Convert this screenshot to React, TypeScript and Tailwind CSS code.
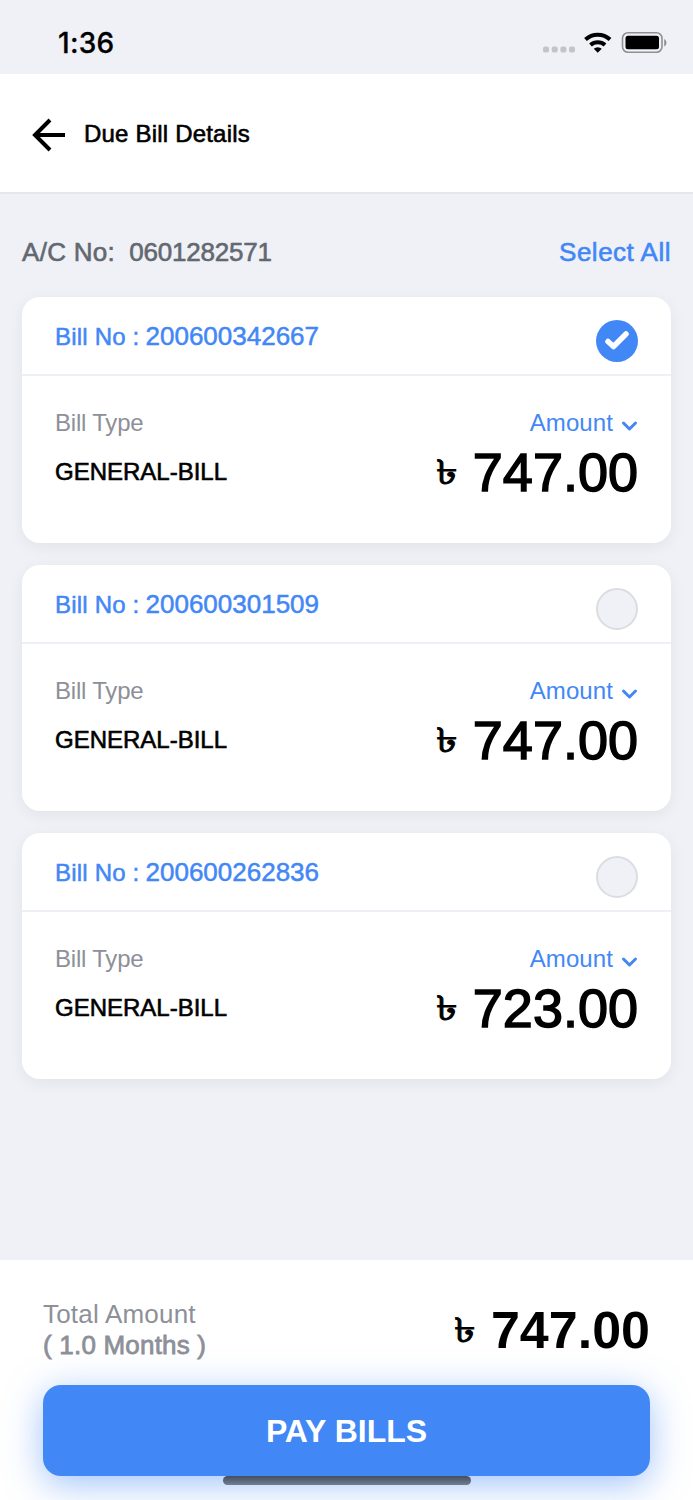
import { useState } from 'react';

type Bill = { billNo: string; type: string; amount: string };

const bills: Bill[] = [
  { billNo: '200600342667', type: 'GENERAL-BILL', amount: '747.00' },
  { billNo: '200600301509', type: 'GENERAL-BILL', amount: '747.00' },
  { billNo: '200600262836', type: 'GENERAL-BILL', amount: '723.00' },
];

function StatusBar() {
  return (
    <div className="h-[74px] flex items-center justify-between pl-[58px] pr-[26px] pt-3">
      <span className="font-['Inter'] font-medium text-[28px] leading-8 tracking-[0.3px] -mt-px [-webkit-text-stroke:0.3px_black]">1:36</span>
      <svg width="124" height="24" viewBox="0 0 124 24" fill="none">
        <g fill="#c3c4c8">
          <rect x="0" y="15.500" width="6" height="6" rx="2" />
          <rect x="8.700" y="15.500" width="6" height="6" rx="2" />
          <rect x="17.400" y="15.500" width="6" height="6" rx="2" />
          <rect x="26" y="15.500" width="6" height="6" rx="2" />
        </g>
        <g stroke="#000" strokeWidth="4">
          <path d="M42.500 8.500a18 18 0 0 1 24.500 0" />
          <path d="M47.500 14a10.800 10.800 0 0 1 14.500 0" />
        </g>
        <path d="M54.750 21.800l-4-4a6 6 0 0 1 8 0z" fill="#000" />
        <rect x="79.500" y="1.800" width="39.500" height="19.500" rx="5.500" stroke="#8f9094" strokeWidth="1.600" />
        <rect x="82.500" y="4.800" width="33.500" height="13.500" rx="2.500" fill="#000" />
        <path d="M121.200 8v7.500c3-1.500 3-6 0-7.500z" fill="#8f9094" />
      </svg>
    </div>
  );
}

function Amount({ value, bold = false }: { value: string; bold?: boolean }) {
  return (
    <div className="flex items-center gap-[15px]">
      <span className="inline-block origin-right scale-x-[1.28] text-[34px] leading-none mb-px [-webkit-text-stroke:0.9px_black]">৳</span>
      <span
        className={
          bold
            ? 'font-bold text-[52px] leading-[56px]'
            : 'text-[54px] leading-[56px] [-webkit-text-stroke:1.5px_black]'
        }
      >
        {value}
      </span>
    </div>
  );
}

function Check({ checked, onClick }: { checked: boolean; onClick: () => void }) {
  return (
    <button
      type="button"
      onClick={onClick}
      className={
        checked
          ? 'size-[42px] mt-[11px] rounded-full bg-[#4287f6] flex items-center justify-center'
          : 'size-[42px] mt-[11px] rounded-full bg-[#f0f1f6] border-2 border-[#dcdde2]'
      }
    >
      {checked && (
        <svg width="26" height="22" viewBox="0 0 26 22" fill="none" stroke="#fff" strokeWidth="5.500" strokeLinecap="round" strokeLinejoin="round">
          <path d="M4 11.500l5.500 5L22 4" />
        </svg>
      )}
    </button>
  );
}

function BillCard({ bill, checked, onToggle }: { bill: Bill; checked: boolean; onToggle: () => void }) {
  return (
    <div className="h-[246px] bg-white rounded-[18px] shadow-[0_4px_16px_rgba(0,0,0,0.06)]">
      <div className="h-[79px] px-[33px] flex items-center justify-between border-b-2 border-[#eff0f5]">
        <div className="flex items-baseline gap-[6px] text-[#4287f6] [-webkit-text-stroke:0.5px_#4287f6] pt-[2px]">
          <span className="text-[24px] leading-8 tracking-[0.2px]">Bill No :</span>
          <span className="text-[26px] leading-8">{bill.billNo}</span>
        </div>
        <Check checked={checked} onClick={onToggle} />
      </div>
      <div className="px-[33px] pt-[31px] flex justify-between">
        <div>
          <p className="text-[24px] leading-8 tracking-[-0.2px] text-[#8d9098]">Bill Type</p>
          <p className="mt-[17px] text-[24px] leading-8 [-webkit-text-stroke:0.6px_black]">{bill.type}</p>
        </div>
        <div className="flex flex-col items-end">
          <div className="flex items-center gap-[8px] text-[#4287f6]">
            <span className="text-[24px] leading-8 tracking-[0.1px]">Amount</span>
            <svg width="17" height="12" viewBox="0 0 17 12" fill="none" stroke="currentColor" strokeWidth="3" strokeLinecap="round" strokeLinejoin="round" className="mt-[5px]">
              <path d="M2.500 3l6 6 6-6" />
            </svg>
          </div>
          <div className="mt-[5px]">
            <Amount value={bill.amount} />
          </div>
        </div>
      </div>
    </div>
  );
}

export default function App() {
  const [selected, setSelected] = useState<string[]>([bills[0].billNo]);

  function toggle(billNo: string) {
    setSelected(prev => (prev.includes(billNo) ? prev.filter(b => b !== billNo) : [...prev, billNo]));
  }

  const total = bills
    .filter(b => selected.includes(b.billNo))
    .reduce((sum, b) => sum + parseFloat(b.amount), 0);

  return (
    <div className="w-[693px] h-[1500px] flex flex-col overflow-hidden bg-[#f0f1f6] font-['Liberation_Sans',sans-serif] text-black">
      <StatusBar />
      <header className="h-[120px] bg-white border-b-2 border-[#e5e6eb] flex items-center gap-[18px] pl-[32px] pt-[3px]">
        <svg width="34" height="34" viewBox="0 0 34 34" fill="none" stroke="#000" strokeWidth="4">
          <path d="M33 17H4M18 2L3 17l15 15" />
        </svg>
        <h1 className="-mt-[2px] text-[24px] leading-8 tracking-[0.2px] [-webkit-text-stroke:0.6px_black]">Due Bill Details</h1>
      </header>

      <main className="flex-1 px-[22px]">
        <div className="h-[103px] pt-[42px] flex justify-between text-[26px] leading-8">
          <div className="flex gap-[14px] text-[#626870] [-webkit-text-stroke:0.6px_#626870]">
            <span className="tracking-[0.3px]">A/C No:</span>
            <span className="tracking-[-0.2px]">0601282571</span>
          </div>
          <button type="button" onClick={() => setSelected(bills.map(b => b.billNo))} className="h-8 tracking-[0.5px] text-[#4287f6] [-webkit-text-stroke:0.6px_#4287f6]">
            Select All
          </button>
        </div>
        <div className="flex flex-col gap-[22px]">
          {bills.map(bill => (
            <BillCard key={bill.billNo} bill={bill} checked={selected.includes(bill.billNo)} onToggle={() => toggle(bill.billNo)} />
          ))}
        </div>
      </main>

      <footer className="relative h-[240px] bg-white px-[43px] pt-[39px]">
        <div className="h-[86px] flex justify-between">
          <div className="text-[26px] leading-[31px] text-[#8d9098]">
            <p className="tracking-[0.2px]">Total Amount</p>
            <p className="tracking-[0.2px] [-webkit-text-stroke:0.8px_#8d9098]">( {selected.length.toFixed(1)} Months )</p>
          </div>
          <div className="pt-[3px]">
            <Amount value={total.toFixed(2)} bold />
          </div>
        </div>
        <button type="button" className="w-full h-[91px] rounded-[18px] bg-[#4287f6] text-white font-bold text-[32px] shadow-[0_8px_36px_rgba(66,135,246,0.5)]">
          PAY BILLS
        </button>
        <div className="absolute left-[223px] top-[216px] w-[248px] h-[9px] rounded-full bg-linear-to-b from-[#444f60] to-[#727e91]" />
      </footer>
    </div>
  );
}
